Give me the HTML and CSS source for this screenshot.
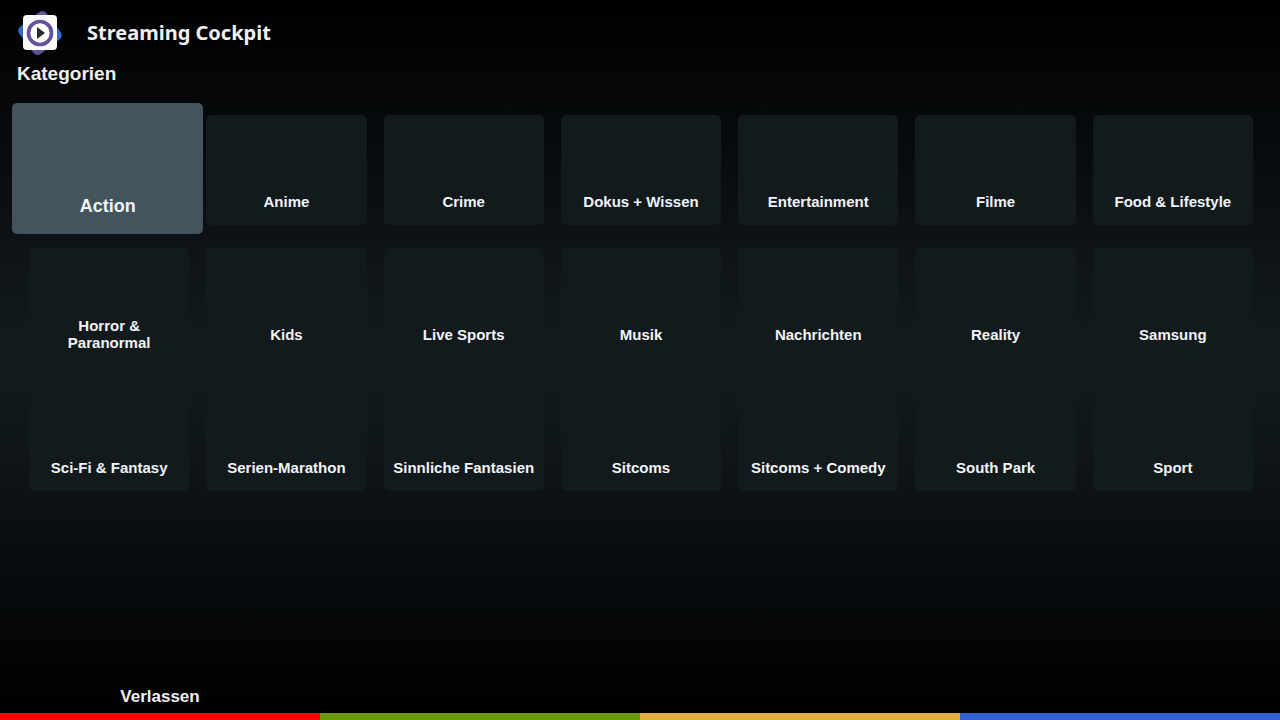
FILE: index.html
```html
<!DOCTYPE html>
<html lang="de">
<head>
<meta charset="utf-8">
<meta name="viewport" content="width=device-width, initial-scale=1">
<title>Streaming Cockpit</title>
<link rel="stylesheet" href="styles.css">
</head>
<body class="app">
<header class="header">
  <svg class="logo" viewBox="0 0 44 46" aria-hidden="true">
    <clipPath id="middle"><rect x="8" y="0" width="28" height="46"/></clipPath>
    <rect x="5" y="6" width="34" height="34" rx="5" fill="#3567c4" transform="rotate(53 22 23)"/>
    <g clip-path="url(#middle)">
      <rect x="5" y="6" width="34" height="34" rx="5" fill="#66519a" transform="rotate(53 22 23)"/>
    </g>
    <rect x="5" y="5" width="34" height="35" rx="4" fill="#fafafa"/>
    <circle cx="22" cy="23" r="11.5" fill="#fff" stroke="#66519a" stroke-width="3.6"/>
    <path d="M19 17 L27 23 L19 29 Z" fill="#2b292c"/>
  </svg>
  <h1 class="title">Streaming Cockpit</h1>
</header>
<main class="main">
  <h2 class="heading">Kategorien</h2>
  <div class="grid">
    <button class="card card-focused" type="button"><span class="label">Action</span></button>
    <button class="card" type="button"><span class="label">Anime</span></button>
    <button class="card" type="button"><span class="label">Crime</span></button>
    <button class="card" type="button"><span class="label">Dokus + Wissen</span></button>
    <button class="card" type="button"><span class="label">Entertainment</span></button>
    <button class="card" type="button"><span class="label">Filme</span></button>
    <button class="card" type="button"><span class="label">Food &amp; Lifestyle</span></button>
    <button class="card" type="button"><span class="label">Horror &amp; Paranormal</span></button>
    <button class="card" type="button"><span class="label">Kids</span></button>
    <button class="card" type="button"><span class="label">Live Sports</span></button>
    <button class="card" type="button"><span class="label">Musik</span></button>
    <button class="card" type="button"><span class="label">Nachrichten</span></button>
    <button class="card" type="button"><span class="label">Reality</span></button>
    <button class="card" type="button"><span class="label">Samsung</span></button>
    <button class="card" type="button"><span class="label">Sci-Fi &amp; Fantasy</span></button>
    <button class="card" type="button"><span class="label">Serien-Marathon</span></button>
    <button class="card" type="button"><span class="label">Sinnliche Fantasien</span></button>
    <button class="card" type="button"><span class="label">Sitcoms</span></button>
    <button class="card" type="button"><span class="label">Sitcoms + Comedy</span></button>
    <button class="card" type="button"><span class="label">South Park</span></button>
    <button class="card" type="button"><span class="label">Sport</span></button>
  </div>
</main>
<footer class="keys">
  <button class="key key-red" type="button">Verlassen</button>
  <button class="key key-green" type="button" aria-label="Grün"></button>
  <button class="key key-yellow" type="button" aria-label="Gelb"></button>
  <button class="key key-blue" type="button" aria-label="Blau"></button>
</footer>
</body>
</html>
```
FILE: styles.css
```css
* {
  box-sizing: border-box;
}

.app {
  margin: 0;
  min-height: 100vh;
  display: flex;
  flex-direction: column;
  background: linear-gradient(#000000, #0d1216 33%, #121a1d 46%, #121a1d 54%, #0d1216 68%, #000000 98%);
  color: #f0f0f0;
  font-family: "Liberation Sans", Arial, sans-serif;
}

.header {
  display: flex;
  align-items: center;
  gap: 25px;
  height: 64px;
  padding: 2px 18px 0;
}

.logo {
  width: 44px;
  height: 46px;
}

.title {
  margin: 0;
  font: 700 20px/28px "Noto Sans", "Open Sans", sans-serif;
}

.main {
  flex: 1;
}

.heading {
  margin: 0 17px;
  font-size: 19px;
  line-height: 20px;
}

.grid {
  display: grid;
  grid-template-columns: repeat(7, minmax(0, 1fr));
  grid-auto-rows: minmax(110px, auto);
  gap: 23px 17px;
  padding: 31px 27px 0 29px;
}

.card {
  display: flex;
  align-items: flex-end;
  justify-content: center;
  border: 0;
  border-radius: 5px;
  padding: 0 6px 6px;
  background: #131a1c;
  color: #f0f3fa;
  font: 700 15px/17px "Liberation Sans", Arial, sans-serif;
}

.label {
  display: flex;
  align-items: center;
  justify-content: center;
  min-height: 36px;
  text-align: center;
}

.card-focused {
  z-index: 1;
  margin: -12px -14px -9px -17px;
  background: #43545d;
  font-size: 18px;
  padding-bottom: 10px;
}

.keys {
  display: grid;
  grid-template-columns: repeat(4, 1fr);
}

.key {
  height: 33px;
  border: 0;
  border-bottom: 7px solid;
  padding: 0 0 7px;
  background: none;
  color: #f0f0f0;
  font: 700 17px/20px "Liberation Sans", Arial, sans-serif;
}

.key-red {
  border-color: #ff0000;
}

.key-green {
  border-color: #699b00;
}

.key-yellow {
  border-color: #e3ae42;
}

.key-blue {
  border-color: #3262cc;
}
```
